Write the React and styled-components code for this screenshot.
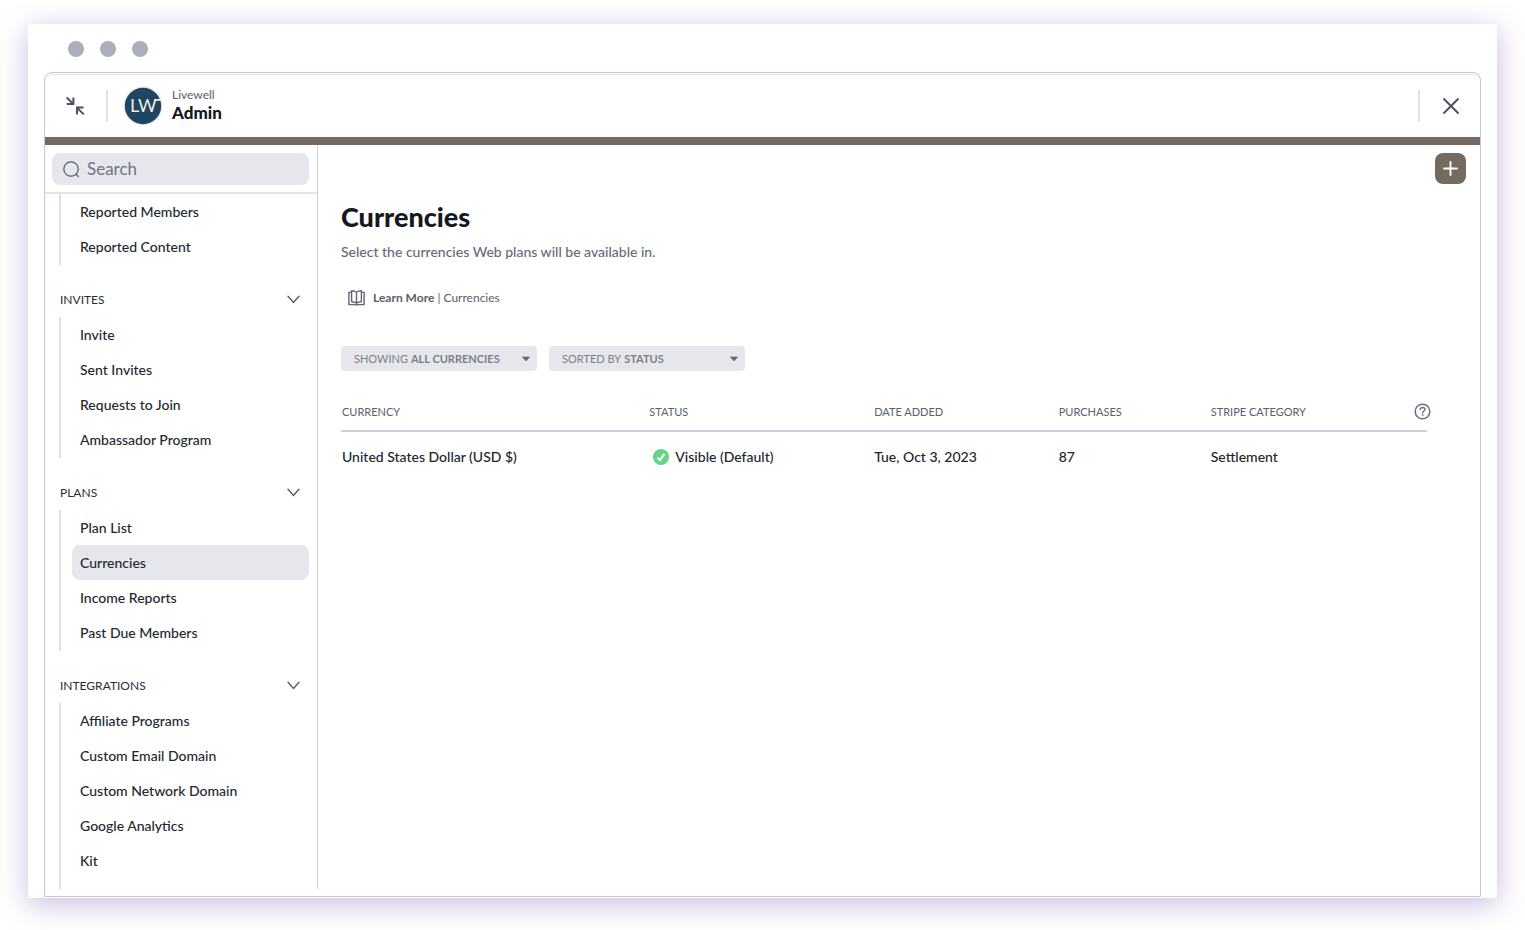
import React from "react";
import styled, { createGlobalStyle } from "styled-components";

const Global = createGlobalStyle`
  *, *::before, *::after { box-sizing: border-box; }
  body { margin: 0; background: #fff; color: #20242c; font-family: Lato, "Open Sans", sans-serif; font-size: 14px; }
  button, input, select { font: inherit; color: inherit; }
  h1, h2, p, ul { margin: 0; padding: 0; }
  ul { list-style: none; }
`;

const Page = styled.div`
  min-height: 100vh;
  display: flex;
  padding: 24px 28px 32px;
`;

const Browser = styled.div`
  flex: 1;
  min-width: 0;
  display: flex;
  flex-direction: column;
  padding: 0 16px 1px;
  background: #fff;
  box-shadow: 0 6px 28px rgba(96, 56, 156, 0.34);
`;

const Dots = styled.div`
  display: flex;
  align-items: center;
  gap: 16px;
  height: 48px;
  padding: 2px 24px 0;
`;

const Dot = styled.span`
  width: 16px;
  height: 16px;
  border-radius: 50%;
  background: #abafb9;
`;

const Panel = styled.div`
  flex: 1;
  display: flex;
  flex-direction: column;
  border: 1px solid #c3c7d6;
  border-radius: 8px 8px 0 0;
`;

const Header = styled.header`
  display: flex;
  align-items: center;
  height: 71px;
  margin-top: 1px;
  padding: 0 17px 0 18px;
  border-top: 1px solid #e4e5ea;
  border-bottom: 8px solid #746b60;
  border-radius: 7px 7px 0 0;
`;

const IconButton = styled.button`
  display: flex;
  align-items: center;
  justify-content: center;
  width: 24px;
  height: 24px;
  padding: 0;
  border: 0;
  background: none;
  color: #4b5160;
`;

const Rule = styled.span`
  width: 2px;
  height: 32px;
  margin: ${(p) => p.$margin};
  background: #e0e1e7;
`;

const Brand = styled.div`
  display: flex;
  align-items: center;
  gap: 9px;
  flex: 1;
`;

const BrandText = styled.div`
  padding-bottom: 3px;
`;

const Network = styled.p`
  color: #5b606c;
  font-size: 12px;
  line-height: 16px;
`;

const Area = styled.h2`
  color: #14171d;
  font-size: 17px;
  font-weight: 900;
  line-height: 20px;
`;

const Body = styled.div`
  flex: 1;
  display: flex;
  padding-bottom: 7px;
`;

const Sidebar = styled.nav`
  width: 273px;
  flex-shrink: 0;
  display: flex;
  flex-direction: column;
  border-right: 1px solid #cfd0d8;
`;

const SearchBar = styled.div`
  padding: 8px 8px 7px 7px;
  border-bottom: 2px solid #e3e4ea;
`;

const SearchField = styled.label`
  display: flex;
  align-items: center;
  gap: 7px;
  height: 32px;
  padding: 0 11px;
  border-radius: 8px;
  background: #e6e7ec;
`;

const SearchInput = styled.input`
  flex: 1;
  min-width: 0;
  padding: 0;
  border: 0;
  outline: 0;
  background: none;
  font-size: 17px;
  line-height: 20px;
  &::placeholder { color: #6f7480; opacity: 1; }
`;

const GroupHead = styled.button`
  display: flex;
  align-items: center;
  justify-content: space-between;
  height: 52px;
  padding: 16px 17px 0 15px;
  border: 0;
  background: none;
  font-size: 12px;
  color: #2a2d36;
`;

const List = styled.ul`
  margin-left: 14px;
  padding: 0 8px 1px 11px;
  border-left: 2px solid #e0e1e7;
  &:last-child { flex: 1; }
`;

const Item = styled.a`
  display: block;
  padding: 0 8px;
  border-radius: 8px;
  background: ${(p) => (p.$active ? "#e6e7ec" : "none")};
  color: #23272f;
  font-size: 14px;
  font-weight: 500;
  line-height: 35px;
  text-decoration: none;
`;

const Main = styled.main`
  flex: 1;
  min-width: 0;
  display: flex;
  flex-direction: column;
`;

const Toolbar = styled.div`
  display: flex;
  justify-content: flex-end;
  padding: 8px 14px 0;
`;

const AddButton = styled(IconButton)`
  width: 31px;
  height: 31px;
  border-radius: 8px;
  background: #746b60;
  color: #fff;
`;

const Content = styled.div`
  padding: 15px 53px 24px 23px;
`;

const Title = styled.h1`
  color: #14191f;
  font-size: 27px;
  font-weight: 900;
  line-height: 36px;
`;

const Lead = styled.p`
  margin-top: 5px;
  color: #656a76;
  font-size: 14px;
  font-weight: 500;
  line-height: 24px;
`;

const Learn = styled.a`
  display: flex;
  align-items: center;
  gap: 8px;
  margin: 21px 0 35px 7px;
  color: #5b606c;
  font-size: 12px;
  line-height: 26px;
  text-decoration: none;
`;

const Filters = styled.div`
  display: flex;
  gap: 12px;
`;

const Filter = styled.label`
  display: flex;
  align-items: center;
  gap: 3px;
  width: 196px;
  height: 25px;
  padding: 0 7px 0 13px;
  border-radius: 4px;
  background: #e6e7ec;
  color: #7b7f8a;
  font-size: 11px;
`;

const FilterSelect = styled.select`
  flex: 1;
  min-width: 0;
  padding: 0;
  border: 0;
  outline: 0;
  appearance: none;
  background: none;
  font-weight: 700;
`;

const Table = styled.table`
  width: 100%;
  margin-top: 35px;
  border-collapse: collapse;
  table-layout: fixed;
`;

const Th = styled.th`
  width: ${(p) => p.$width};
  padding: 0 1px 13px;
  border-bottom: 2px solid #ccd0da;
  color: #5b606c;
  font-size: 11px;
  font-weight: 400;
  line-height: 1;
  text-align: left;
`;

const ThInner = styled.div`
  display: flex;
  align-items: center;
  justify-content: space-between;
  height: 0;
  margin-right: -5px;
`;

const Td = styled.td`
  height: 50px;
  padding: 0 1px;
  font-size: 14px;
  font-weight: 500;
`;

const Status = styled.span`
  display: flex;
  align-items: center;
  gap: 6px;
  padding-left: 4px;
`;

const groups = [
  { items: ["Reported Members", "Reported Content"] },
  { title: "INVITES", items: ["Invite", "Sent Invites", "Requests to Join", "Ambassador Program"] },
  { title: "PLANS", items: ["Plan List", "Currencies", "Income Reports", "Past Due Members"] },
  { title: "INTEGRATIONS", items: ["Affiliate Programs", "Custom Email Domain", "Custom Network Domain", "Google Analytics", "Kit"] },
];

const CollapseIcon = () => (
  <svg width="20" height="20" viewBox="0 0 20 20" fill="none" stroke="currentColor" strokeWidth="2">
    <path d="M1.6 1.4 7.6 7.2M1.8 8H8.4V1.4" />
    <path d="M18.8 18.4 12.8 12.6M18.6 11.6H12V18.4" />
  </svg>
);

const Logo = () => (
  <svg width="40" height="40" viewBox="0 0 40 40" role="img" aria-label="Livewell">
    <circle cx="20" cy="20" r="19.5" fill="#e7eae4" />
    <circle cx="20" cy="20" r="18.2" fill="#1e4562" />
    <text x="7" y="26" fill="#f3efe2" fontFamily="Lato, sans-serif" fontSize="18">LW</text>
    <path d="M31 13.9H39" fill="none" stroke="#f3efe2" strokeWidth="1.8" />
  </svg>
);

const CloseIcon = () => (
  <svg width="18" height="18" viewBox="0 0 18 18" fill="none" stroke="currentColor" strokeWidth="1.9" strokeLinecap="round">
    <path d="M2 2 16 16M16 2 2 16" />
  </svg>
);

const SearchIcon = () => (
  <svg width="17" height="17" viewBox="0 0 17 17" fill="none" stroke="#555b68" strokeWidth="1.2" strokeLinecap="round">
    <circle cx="8" cy="8" r="7.2" />
    <path d="M13 13 15.4 15.6" />
  </svg>
);

const Chevron = () => (
  <svg width="13" height="9" viewBox="0 0 13 9" fill="none" stroke="#555b68" strokeWidth="1.4" strokeLinecap="round">
    <path d="M1 1.2 6.5 7.4 12 1.2" />
  </svg>
);

const PlusIcon = () => (
  <svg width="15" height="15" viewBox="0 0 15 15" fill="none" stroke="currentColor" strokeWidth="1.9" strokeLinecap="round">
    <path d="M7.5 1V14M1 7.5H14" />
  </svg>
);

const BookIcon = () => (
  <svg width="17" height="16" viewBox="0 0 17 16" fill="none" stroke="#5f6572" strokeWidth="1.4" strokeLinejoin="round">
    <path d="M8.5 2.4C7.4 1.2 5.6.8 3.6.8V11.8C5.6 11.8 7.4 12.2 8.5 13.2 9.6 12.2 11.4 11.8 13.4 11.8V.8C11.4.8 9.6 1.2 8.5 2.4ZM8.5 2.4V13" />
    <path d="M3.4 2.4H.9V14.6H7L8.5 15 10 14.6H16.1V2.4H13.6" />
  </svg>
);

const Caret = () => (
  <svg width="8" height="6" viewBox="0 0 8 6">
    <path d="M.5 1H7.5L4 5Z" fill="#666b78" stroke="#666b78" strokeWidth=".8" strokeLinejoin="round" />
  </svg>
);

const HelpIcon = () => (
  <svg width="17" height="17" viewBox="0 0 17 17" fill="none" stroke="#697080" strokeWidth="1.5" strokeLinecap="round">
    <circle cx="8.5" cy="8.5" r="7.3" />
    <path d="M6.2 6.4C6.4 5 7.4 4.4 8.6 4.4 9.9 4.4 10.9 5.2 10.9 6.4 10.9 8 8.6 8 8.6 9.9" />
    <circle cx="8.6" cy="12.3" r=".3" />
  </svg>
);

const CheckIcon = () => (
  <svg width="16" height="16" viewBox="0 0 16 16" fill="none">
    <circle cx="8" cy="8" r="8" fill="#64d488" />
    <path d="M4.4 8.6 6.9 11.2 11.4 4.8" stroke="#fff" strokeWidth="2" />
  </svg>
);

export default function App() {
  return (
    <Page>
      <Global />
      <Browser>
        <Dots><Dot /><Dot /><Dot /></Dots>
        <Panel>
          <Header>
            <IconButton aria-label="Collapse"><CollapseIcon /></IconButton>
            <Rule $margin="0 15px 0 19px" />
            <Brand>
              <Logo />
              <BrandText>
                <Network>Livewell</Network>
                <Area>Admin</Area>
              </BrandText>
            </Brand>
            <Rule $margin="0 19px 0 0" />
            <IconButton aria-label="Close"><CloseIcon /></IconButton>
          </Header>
          <Body>
            <Sidebar aria-label="Admin">
              <SearchBar>
                <SearchField>
                  <SearchIcon />
                  <SearchInput type="text" placeholder="Search" aria-label="Search" />
                </SearchField>
              </SearchBar>
              {groups.map((group, i) => (
                <React.Fragment key={i}>
                  {group.title && <GroupHead>{group.title}<Chevron /></GroupHead>}
                  <List>
                    {group.items.map((item) => (
                      <li key={item}><Item href="#" $active={item === "Currencies"}>{item}</Item></li>
                    ))}
                  </List>
                </React.Fragment>
              ))}
            </Sidebar>
            <Main>
              <Toolbar><AddButton aria-label="Add currency"><PlusIcon /></AddButton></Toolbar>
              <Content>
                <Title>Currencies</Title>
                <Lead>Select the currencies Web plans will be available in.</Lead>
                <Learn href="#">
                  <BookIcon />
                  <span><b>Learn More</b> | Currencies</span>
                </Learn>
                <Filters>
                  <Filter>
                    SHOWING
                    <FilterSelect><option>ALL CURRENCIES</option></FilterSelect>
                    <Caret />
                  </Filter>
                  <Filter>
                    SORTED BY
                    <FilterSelect><option>STATUS</option></FilterSelect>
                    <Caret />
                  </Filter>
                </Filters>
                <Table>
                  <thead>
                    <tr>
                      <Th $width="28.3%">CURRENCY</Th>
                      <Th $width="20.7%">STATUS</Th>
                      <Th $width="17%">DATE ADDED</Th>
                      <Th $width="14%">PURCHASES</Th>
                      <Th $width="20%"><ThInner>STRIPE CATEGORY<HelpIcon /></ThInner></Th>
                    </tr>
                  </thead>
                  <tbody>
                    <tr>
                      <Td>United States Dollar (USD $)</Td>
                      <Td><Status><CheckIcon />Visible (Default)</Status></Td>
                      <Td>Tue, Oct 3, 2023</Td>
                      <Td>87</Td>
                      <Td>Settlement</Td>
                    </tr>
                  </tbody>
                </Table>
              </Content>
            </Main>
          </Body>
        </Panel>
      </Browser>
    </Page>
  );
}
